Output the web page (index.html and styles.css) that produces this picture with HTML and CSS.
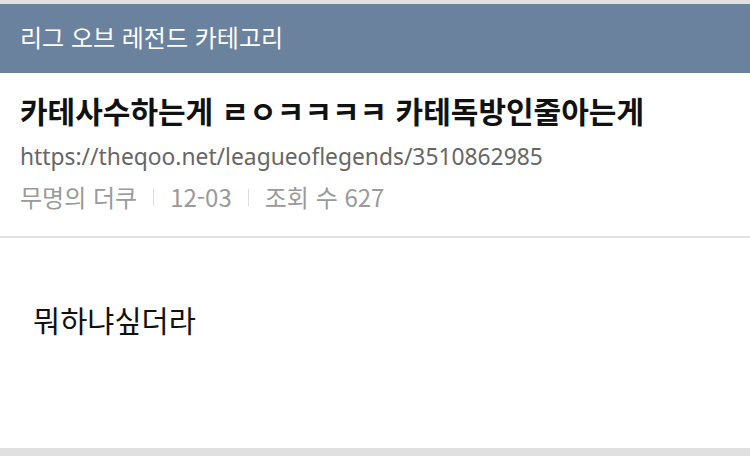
FILE: index.html
```html
<!DOCTYPE html>
<html lang="ko">
<head>
    <meta charset="UTF-8">
    <meta name="viewport" content="width=device-width, initial-scale=1.0">
    <title>리그 오브 레전드 카테고리</title>
    <link rel="stylesheet" href="styles.css">
</head>
<body>
    <div class="page">
        <header class="category-bar">리그 오브 레전드 카테고리</header>
        <section class="post-head">
            <h1 class="post-title">카테사수하는게 ㄹㅇㅋㅋㅋㅋ 카테독방인줄아는게</h1>
            <div class="post-url">https://theqoo.net/leagueoflegends/3510862985</div>
            <div class="post-meta">
                <span>무명의 더쿠</span>
                <span class="sep"></span>
                <span>12-03</span>
                <span class="sep"></span>
                <span>조회 수 627</span>
            </div>
        </section>
        <article class="post-body">뭐하냐싶더라</article>
        <div class="page-foot"></div>
    </div>
</body>
</html>
```

FILE: styles.css
```css
:root { --header-bg: #6b829e; --line: #e0e0e0; --muted: #9a9a9a; }
html, body { margin: 0; height: 100%; background: #fff; font-family: "Noto Sans CJK KR", "Noto Sans", sans-serif; }
.page { display: flex; flex-direction: column; height: 100%; border-top: 4px solid var(--line); box-sizing: border-box; }
.category-bar { background: var(--header-bg); color: #fff; height: 69px; box-sizing: border-box; display: flex; align-items: center; padding: 0 20px 5px; font-size: 24px; }
.post-head { padding: 16px 20px 19px; border-bottom: 2px solid var(--line); }
.post-title { margin: 0; font-size: 30px; font-weight: 700; color: #111; line-height: 42px; }
.post-url { font-family: "Noto Sans", sans-serif; font-size: 22.8px; color: #666; line-height: 36px; margin-top: 8px; }
.post-meta { display: flex; align-items: center; gap: 16px; font-size: 24px; color: var(--muted); line-height: 40px; margin-top: 2px; }
.post-meta .sep { width: 1px; height: 17px; background: #ddd; }
.post-body { flex: 1; padding: 61px 33px 0; font-size: 29.5px; line-height: 40px; color: #111; }
.page-foot { height: 8px; background: var(--line); }
```
